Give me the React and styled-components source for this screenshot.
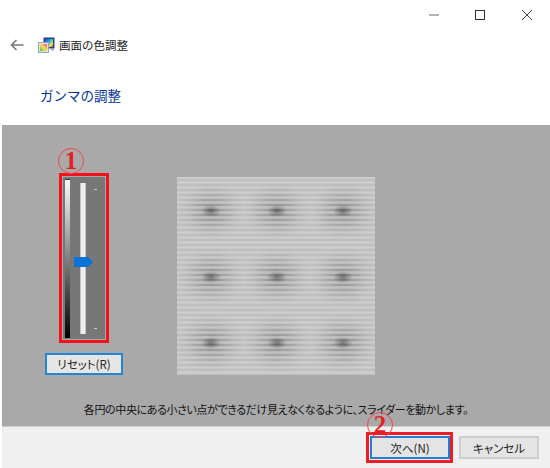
import styled, { createGlobalStyle } from "styled-components"

const GlobalStyle = createGlobalStyle`
  html, body {
    margin: 0;
    padding: 0;
    background: #fff;
  }
  body {
    font-family: "Noto Sans CJK JP", "Noto Sans", sans-serif;
  }
`

const dots = [211, 277, 343]

const App = () => {
  return (
    <Page>
      <GlobalStyle />
      <TitleBar>
        <WindowButton>
          <svg width="12" height="12" viewBox="0 0 12 12">
            <path d="M1 6h10" stroke="#999" strokeWidth="1.5" />
          </svg>
        </WindowButton>
        <WindowButton>
          <svg width="12" height="12" viewBox="0 0 12 12">
            <rect x="1.5" y="1.5" width="9" height="9" fill="none" stroke="#333" />
          </svg>
        </WindowButton>
        <WindowButton>
          <svg width="12" height="12" viewBox="0 0 12 12">
            <path d="M1 1l10 10M11 1L1 11" stroke="#444" />
          </svg>
        </WindowButton>
      </TitleBar>
      <NavRow>
        <svg width="14" height="12" viewBox="0 0 14 12">
          <path d="M13.5 6H1.5M6.5 1L1.5 6l5 5" fill="none" stroke="#777" strokeWidth="1.6" />
        </svg>
        <AppIcon />
        <NavTitle>画面の色調整</NavTitle>
      </NavRow>
      <Heading>ガンマの調整</Heading>
      <Panel>
        <Columns>
          <SliderColumn>
            <CircleNumber>1</CircleNumber>
            <SliderBox>
              <SliderInner>
                <GradientBar />
                <Track />
                <Thumb />
                <Tick $top={12} />
                <Tick $top={151} />
              </SliderInner>
            </SliderBox>
            <ResetButton>リセット(R)</ResetButton>
          </SliderColumn>
          <GammaPattern />
        </Columns>
        <Hint>各円の中央にある小さい点ができるだけ見えなくなるように、スライダーを動かします。</Hint>
      </Panel>
      <Footer>
        <NextWrap>
          <CircleNumber $next>2</CircleNumber>
          <ActionButton $primary>次へ(N)</ActionButton>
        </NextWrap>
        <ActionButton>キャンセル</ActionButton>
      </Footer>
    </Page>
  )
}

const AppIcon = () => (
  <svg width="17" height="17" viewBox="0 0 17 17" style={{ marginLeft: 14 }}>
    <defs>
      <linearGradient id="rainbow" x1="0" y1="0" x2="1" y2="1">
        <stop offset="0" stopColor="#1c2fd0" />
        <stop offset="0.45" stopColor="#26c0d8" />
        <stop offset="0.75" stopColor="#f2e23a" />
        <stop offset="1" stopColor="#e23a3a" />
      </linearGradient>
      <linearGradient id="rainbow2" x1="0" y1="1" x2="1" y2="0">
        <stop offset="0" stopColor="#3ccf4a" />
        <stop offset="0.5" stopColor="#f4e04a" />
        <stop offset="1" stopColor="#e84fa0" />
      </linearGradient>
    </defs>
    <rect x="5.5" y="0.5" width="11" height="11" fill="#2b3f8f" />
    <rect x="7" y="2" width="8" height="8" fill="url(#rainbow)" />
    <rect x="13" y="11.5" width="3" height="2" fill="#9aa4b4" />
    <rect x="0.5" y="5.5" width="10" height="10" fill="#dfe4ea" stroke="#9aa4ae" />
    <rect x="2" y="7" width="7" height="7" fill="url(#rainbow2)" />
  </svg>
)

const GammaPattern = () => (
  <PatternSvg width="198" height="198" viewBox="0 0 198 198">
    <defs>
      <pattern id="stripes" width="198" height="5" patternUnits="userSpaceOnUse">
        <rect width="198" height="5" fill="#c8c8c8" />
        <rect y="0" width="198" height="1" fill="#cfcfcf" />
        <rect y="2" width="198" height="2" fill="#c0c0c0" />
      </pattern>
      <radialGradient id="wide">
        <stop offset="0" stopColor="#303030" stopOpacity="0.36" />
        <stop offset="0.5" stopColor="#404040" stopOpacity="0.17" />
        <stop offset="1" stopColor="#808080" stopOpacity="0" />
      </radialGradient>
      <radialGradient id="core">
        <stop offset="0" stopColor="#222" stopOpacity="0.45" />
        <stop offset="1" stopColor="#333" stopOpacity="0" />
      </radialGradient>
      <pattern id="mask-lines" width="198" height="5" patternUnits="userSpaceOnUse">
        <rect width="198" height="5" fill="#666" />
        <rect y="2" width="198" height="2" fill="#fff" />
      </pattern>
      <mask id="line-mask">
        <rect width="198" height="198" fill="url(#mask-lines)" />
      </mask>
    </defs>
    <rect width="198" height="198" fill="url(#stripes)" />
    <g mask="url(#line-mask)">
      {dots.map((cy) =>
        dots.map((cx) => (
          <ellipse key={cx + "-" + cy} cx={cx - 177} cy={cy - 177} rx="33" ry="30" fill="url(#wide)" />
        ))
      )}
    </g>
    {dots.map((cy) =>
      dots.map((cx) => (
        <ellipse key={cx + "/" + cy} cx={cx - 177} cy={cy - 177} rx="10" ry="6" fill="url(#core)" />
      ))
    )}
  </PatternSvg>
)

const Page = styled.div`
  width: 550px;
  height: 468px;
  display: flex;
  flex-direction: column;
  overflow: hidden;
  background: #fff;
  color: #222;
`

const TitleBar = styled.div`
  height: 30px;
  display: flex;
  justify-content: flex-end;
  align-items: center;
`

const WindowButton = styled.div`
  width: 46.5px;
  height: 30px;
  display: flex;
  align-items: center;
  justify-content: center;
`

const NavRow = styled.div`
  height: 30px;
  display: flex;
  align-items: center;
  padding-left: 10px;
`

const NavTitle = styled.span`
  margin-left: 4px;
  font-size: 11.5px;
  color: #222;
`

const Heading = styled.h1`
  margin: 0;
  height: 65px;
  box-sizing: border-box;
  padding: 24px 0 0 40px;
  font-size: 13.5px;
  line-height: 22px;
  font-weight: 400;
  color: #003399;
`

const Panel = styled.div`
  margin-left: 2px;
  height: 301px;
  background: #a9a9a9;
  display: flex;
  flex-direction: column;
`

const Columns = styled.div`
  display: flex;
  padding: 48px 0 0 43px;
`

const SliderColumn = styled.div`
  position: relative;
  width: 78px;
  display: flex;
  flex-direction: column;
  align-items: center;
`

const CircleNumber = styled.span`
  position: absolute;
  left: ${(p) => (p.$next ? "-2px" : "13px")};
  top: ${(p) => (p.$next ? "-23px" : "-25px")};
  width: 24px;
  height: 24px;
  border: 1px solid #ef4a4a;
  border-radius: 50%;
  display: flex;
  align-items: center;
  justify-content: center;
  font-family: "Liberation Serif", serif;
  font-size: 25px;
  line-height: 24px;
  color: #ea1c24;
  font-weight: 700;
`

const SliderBox = styled.div`
  width: 50px;
  height: 170px;
  box-sizing: border-box;
  border: 3px solid #f5101c;
  background: #a9a9a9;
  padding: 1px;
`

const SliderInner = styled.div`
  position: relative;
  height: 100%;
  background: #777;
`

const GradientBar = styled.div`
  position: absolute;
  left: 2px;
  top: 2px;
  width: 5px;
  height: 158px;
  background: linear-gradient(#f8f8f8, #d8d8d8 15%, #808080 50%, #000);
  border-top: 1px solid #333;
`

const Track = styled.div`
  position: absolute;
  left: 17px;
  top: 6px;
  width: 4px;
  height: 151px;
  background: #eee;
  border: solid #c4c4c4;
  border-width: 0 0.5px;
`

const Thumb = styled.div`
  position: absolute;
  left: 11px;
  top: 80px;
  width: 14px;
  height: 10px;
  background: #0a74d6;
  &::after {
    content: "";
    position: absolute;
    left: 14px;
    top: 0;
    border-left: 5px solid #0a74d6;
    border-top: 5px solid transparent;
    border-bottom: 5px solid transparent;
  }
`

const Tick = styled.div`
  position: absolute;
  left: 31px;
  top: ${(p) => p.$top}px;
  width: 3px;
  height: 1px;
  background: #c8c8c8;
`

const ResetButton = styled.button`
  margin-top: 10px;
  width: 78px;
  height: 22px;
  box-sizing: border-box;
  padding: 0;
  border: 2px solid #1f86d8;
  background: #e6e6e6;
  font-family: inherit;
  font-size: 11.5px;
  font-feature-settings: "palt";
  color: #222;
`

const PatternSvg = styled.svg`
  display: block;
  margin-left: 54px;
  margin-top: 4px;
`

const Hint = styled.p`
  margin: 26px 0 0;
  text-align: center;
  font-size: 11px;
  line-height: 16px;
  letter-spacing: -0.38px;
  color: #111;
  font-feature-settings: "palt";
`

const Footer = styled.div`
  margin-left: 2px;
  flex: 1;
  background: #f0f0f0;
  border-top: 1px solid #d0d0d0;
  display: flex;
  justify-content: flex-end;
  align-items: center;
  gap: 6px;
  padding-right: 11px;
`

const NextWrap = styled.div`
  position: relative;
  box-sizing: border-box;
  border: 3px solid #ee1c25;
  padding: 1px 0 1px 1px;
  display: flex;
`

const ActionButton = styled.button`
  width: 80px;
  height: 23px;
  box-sizing: border-box;
  padding: 0;
  border: ${(p) => (p.$primary ? "2px solid #1f7fd0" : "2px solid #cdcdcd")};
  background: #e4e4e4;
  font-family: inherit;
  font-size: 11.5px;
  font-feature-settings: "palt";
  color: #222;
`

export default App
